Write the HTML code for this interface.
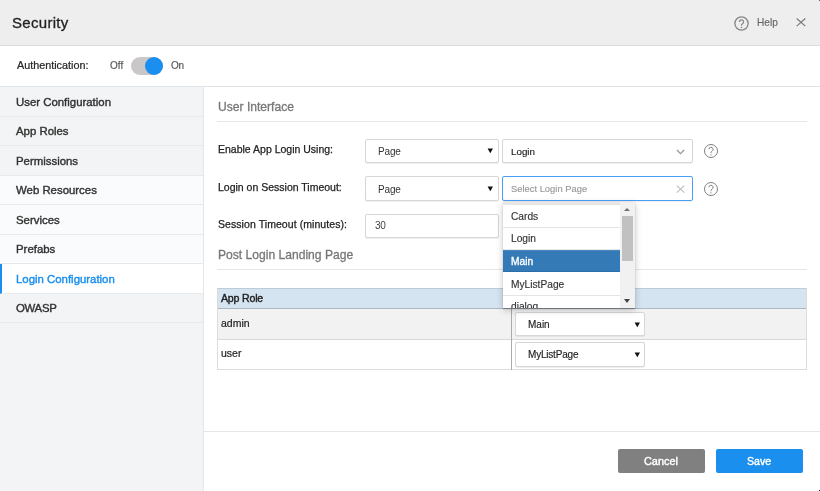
<!DOCTYPE html>
<html><head><meta charset="utf-8">
<style>
*{margin:0;padding:0;box-sizing:border-box}
html,body{width:820px;height:491px;overflow:hidden;background:#fff;-webkit-font-smoothing:antialiased;font-family:"Liberation Sans",sans-serif;color:#333}
.a{position:absolute}
.t{position:absolute;white-space:nowrap;line-height:1;will-change:transform;-webkit-text-stroke-width:.15px}
.m{-webkit-text-stroke-width:.4px}
#hdr{left:0;top:0;width:820px;height:46px;background:#eeeeee;border-bottom:1px solid #dcdcdc}
#auth{left:0;top:46px;width:820px;height:41px;border-bottom:1px solid #dfe4e8}
#side{left:0;top:87px;width:204px;height:404px;background:#f3f4f6;border-right:1px solid #e3e7ea}
.si{position:absolute;left:0;width:203px;border-bottom:1px solid #e6eaed}
.sel{position:absolute;border:1px solid #d6d6d6;border-radius:2px;background:#fff;box-shadow:0 1px 0 rgba(0,0,0,.06)}
.arr{position:absolute;width:0;height:0;border-left:2.8px solid transparent;border-right:2.8px solid transparent;border-top:5px solid #111}
.hline{position:absolute;height:1px;background:#e6e6e6}
</style></head><body>
<!-- header -->
<div id="hdr" class="a"></div>
<div class="t" style="left:12.2px;top:14.8px;font-size:15px;letter-spacing:.3px;color:#222;-webkit-text-stroke-width:.3px">Security</div>
<svg class="a" style="left:734.3px;top:15.8px" width="15" height="15" viewBox="0 0 15 15"><circle cx="7.5" cy="7.5" r="6.6" fill="none" stroke="#858585" stroke-width="1.3"/><path d="M5.4 5.9a2.1 2.1 0 1 1 3.1 1.9c-.6.3-1 .7-1 1.4v.6" fill="none" stroke="#858585" stroke-width="1.2"/><circle cx="7.5" cy="11.4" r=".75" fill="#858585"/></svg>
<div class="t" style="left:757px;top:18.4px;font-size:10.1px;color:#666">Help</div>
<svg class="a" style="left:796.3px;top:17.8px" width="10" height="9" viewBox="0 0 10 9"><path d="M.7 .5L9.3 8.1M9.3 .5L.7 8.1" stroke="#777" stroke-width="1.1"/></svg>

<!-- auth row -->
<div id="auth" class="a"></div>
<div class="t" style="left:17px;top:59.6px;font-size:10.8px;color:#262626;-webkit-text-stroke-width:.22px">Authentication:</div>
<div class="t" style="left:109.5px;top:60.8px;font-size:10px;color:#555">Off</div>
<div class="a" style="left:131px;top:56.7px;width:32px;height:18px;border-radius:9px;background:#c9c7c7"></div>
<div class="a" style="left:145px;top:56.7px;width:18px;height:18px;border-radius:9px;background:#1a8ff0"></div>
<div class="t" style="left:170.5px;top:60.8px;font-size:10px;letter-spacing:-.4px;color:#555">On</div>

<!-- sidebar -->
<div id="side" class="a"></div>
<div class="si" style="top:87px;height:30px"></div>
<div class="si" style="top:117px;height:29px"></div>
<div class="si" style="top:146px;height:30px"></div>
<div class="si" style="top:176px;height:29px;background:#fafbfc"></div>
<div class="si" style="top:205px;height:30px;background:#fafbfc"></div>
<div class="si" style="top:235px;height:29px;background:#fafbfc"></div>
<div class="si" style="top:264px;height:30px;background:#fff;border-left:2px solid #1a8ff0"></div>
<div class="si" style="top:294px;height:29px"></div>
<div class="a" style="left:0;top:176px;width:203px;height:1px;background:#fdfdfe"></div>
<div class="a" style="left:0;top:262px;width:203px;height:1px;background:#fdfdfe"></div>
<div class="t m" style="left:16px;top:96.5px;font-size:11.4px;color:#333">User Configuration</div>
<div class="t m" style="left:16px;top:126.0px;font-size:11.4px;color:#333">App Roles</div>
<div class="t m" style="left:16px;top:155.5px;font-size:11.4px;color:#333">Permissions</div>
<div class="t m" style="left:16px;top:185.0px;font-size:11.4px;color:#333">Web Resources</div>
<div class="t m" style="left:16px;top:214.5px;font-size:11.4px;color:#333">Services</div>
<div class="t m" style="left:16px;top:244.0px;font-size:11.4px;color:#333">Prefabs</div>
<div class="t m" style="left:16px;top:273.5px;font-size:11.4px;color:#1a8ff0">Login Configuration</div>
<div class="t m" style="left:16px;top:303.0px;font-size:11.4px;color:#333;letter-spacing:-.3px">OWASP</div>

<!-- content -->
<div class="t" style="left:218px;top:100.6px;font-size:12.1px;color:#777;-webkit-text-stroke-width:.3px">User Interface</div>
<div class="hline" style="left:217px;top:121px;width:590px"></div>

<div class="t" style="left:218px;top:144.2px;font-size:10.5px;color:#222;-webkit-text-stroke-width:.25px">Enable App Login Using:</div>
<div class="t" style="left:218px;top:181.7px;font-size:10.5px;color:#222;-webkit-text-stroke-width:.25px">Login on Session Timeout:</div>
<div class="t" style="left:218px;top:218.8px;font-size:10.5px;letter-spacing:.07px;color:#222;-webkit-text-stroke-width:.25px">Session Timeout (minutes):</div>

<div class="sel" style="left:365px;top:139px;width:134px;height:24px"></div>
<div class="t" style="left:378px;top:147.2px;font-size:10px;letter-spacing:-.15px;color:#333;-webkit-text-stroke-width:0">Page</div>
<svg class="a" style="left:487.2px;top:148.4px" width="7" height="6" viewBox="0 0 7 6"><path d="M.6 .4H6L3.3 5.2Z" fill="#111"/></svg>
<div class="sel" style="left:502px;top:139px;width:191px;height:24px"></div>
<div class="t" style="left:511.4px;top:147.2px;font-size:9.8px;color:#222">Login</div>
<svg class="a" style="left:675.9px;top:149px" width="9" height="6" viewBox="0 0 9 6"><path d="M.9 1l3.6 3.6L8.1 1" fill="none" stroke="#999" stroke-width="1.3"/></svg>
<svg class="a" style="left:703px;top:143px" width="16" height="16" viewBox="0 0 16 16"><circle cx="8" cy="8" r="6.5" fill="none" stroke="#808080" stroke-width="1"/><path d="M5.9 6.3a2.1 2.1 0 1 1 3.1 1.9c-.6.3-1 .7-1 1.4v.6" fill="none" stroke="#808080" stroke-width="1"/><circle cx="8" cy="11.8" r=".65" fill="#808080"/></svg>

<div class="sel" style="left:365px;top:176px;width:134px;height:25px"></div>
<div class="t" style="left:378px;top:184.5px;font-size:10px;letter-spacing:-.15px;color:#333;-webkit-text-stroke-width:0">Page</div>
<svg class="a" style="left:487.2px;top:185.6px" width="7" height="6" viewBox="0 0 7 6"><path d="M.6 .4H6L3.3 5.2Z" fill="#111"/></svg>
<div class="sel" style="left:502px;top:176px;width:191px;height:25px;border-color:#4a9ff5"></div>
<div class="t" style="left:511.4px;top:184.4px;font-size:9.4px;color:#9a9a9a">Select Login Page</div>
<svg class="a" style="left:676px;top:184.5px" width="9" height="8" viewBox="0 0 9 8"><path d="M.8 .6l7.4 7M8.2 .6l-7.4 7" fill="none" stroke="#bdbdbd" stroke-width="1.1"/></svg>
<svg class="a" style="left:703px;top:180.5px" width="16" height="16" viewBox="0 0 16 16"><circle cx="8" cy="8" r="6.5" fill="none" stroke="#808080" stroke-width="1"/><path d="M5.9 6.3a2.1 2.1 0 1 1 3.1 1.9c-.6.3-1 .7-1 1.4v.6" fill="none" stroke="#808080" stroke-width="1"/><circle cx="8" cy="11.8" r=".65" fill="#808080"/></svg>

<div class="sel" style="left:365px;top:214px;width:134px;height:24px"></div>
<div class="t" style="left:374.8px;top:221.4px;font-size:10px;letter-spacing:-.3px;color:#444;-webkit-text-stroke-width:0">30</div>

<div class="t" style="left:218px;top:248.6px;font-size:12.1px;color:#777;-webkit-text-stroke-width:.3px">Post Login Landing Page</div>
<div class="hline" style="left:217px;top:269px;width:590px"></div>

<!-- table -->
<div class="a" style="left:217px;top:288px;width:590px;height:82px;border:1px solid #dcdcdc;border-top-color:#bccdd9"></div>
<div class="a" style="left:218px;top:289px;width:588px;height:20px;background:#d4e4f0;border-bottom:1px solid #adb9c2"></div>
<div class="a" style="left:218px;top:309px;width:588px;height:31px;background:#f2f2f2;border-bottom:1px solid #d8d8d8"></div>
<div class="a" style="left:511px;top:300px;width:1px;height:70px;background:#ababab"></div>
<div class="t" style="left:221.3px;top:292.6px;font-size:10.6px;letter-spacing:-.2px;-webkit-text-stroke-width:.4px;color:#222">App Role</div>
<div class="t" style="left:221.3px;top:318px;font-size:10.5px;color:#262626;-webkit-text-stroke-width:.22px">admin</div>
<div class="t" style="left:221.3px;top:348px;font-size:10.5px;color:#262626;-webkit-text-stroke-width:.22px">user</div>
<div class="sel" style="left:515px;top:312px;width:130px;height:24px"></div>
<div class="t" style="left:528.4px;top:319.9px;font-size:10px;color:#222">Main</div>
<svg class="a" style="left:633.6px;top:321.6px" width="7" height="6" viewBox="0 0 7 6"><path d="M.6 .4H6L3.3 5.2Z" fill="#111"/></svg>
<div class="sel" style="left:515px;top:342px;width:130px;height:24.5px"></div>
<div class="t" style="left:528.4px;top:350.2px;font-size:10px;letter-spacing:-.2px;color:#222">MyListPage</div>
<svg class="a" style="left:633.6px;top:351.7px" width="7" height="6" viewBox="0 0 7 6"><path d="M.6 .4H6L3.3 5.2Z" fill="#111"/></svg>

<!-- dropdown -->
<div class="a" style="left:503px;top:202px;width:132px;height:106px;background:#fff;box-shadow:0 1px 1px rgba(0,0,0,.25),0 2px 7px rgba(0,0,0,.22);overflow:hidden">
  <div class="a" style="left:0;top:0;width:117px;height:3px;background:#e6e6e6"></div>
  <div class="a" style="left:0;top:3px;width:117px;height:23px;border-bottom:1px solid #e5e5e5"></div>
  <div class="a" style="left:0;top:26px;width:117px;height:22px;border-bottom:1px solid #e5e5e5"></div>
  <div class="a" style="left:0;top:48.3px;width:117px;height:21.7px;background:#337ab7;border-bottom:1px solid #2c6dab;border-top:1px solid #4a87c0"></div>
  <div class="a" style="left:0;top:70px;width:117px;height:24px;border-bottom:1px solid #e5e5e5"></div>
  <div class="t" style="left:8.1px;top:10.4px;font-size:10.2px;color:#333">Cards</div>
  <div class="t" style="left:8.1px;top:32.4px;font-size:10.2px;color:#333">Login</div>
  <div class="t" style="left:8.1px;top:55px;font-size:10.2px;color:#fff;-webkit-text-stroke:.35px #fff">Main</div>
  <div class="t" style="left:8.1px;top:77.8px;font-size:10.2px;color:#333">MyListPage</div>
  <div class="t" style="left:8.1px;top:100.3px;font-size:10.2px;color:#333">dialog</div>
  <div class="a" style="left:117px;top:0;width:15px;height:106px;background:#f1f1f1"></div>
  <div class="a" style="left:119px;top:13.8px;width:11px;height:45.4px;background:#c1c1c1"></div>
  <div class="a" style="left:120.5px;top:5.8px;width:0;height:0;border-left:3.5px solid transparent;border-right:3.5px solid transparent;border-bottom:3.5px solid #707070"></div>
  <div class="a" style="left:120.8px;top:96.8px;width:0;height:0;border-left:3.7px solid transparent;border-right:3.7px solid transparent;border-top:4px solid #444"></div>
</div>

<!-- footer -->
<div class="hline" style="left:204px;top:431px;width:616px;background:#e3e7ea"></div>
<div class="a" style="left:618px;top:449px;width:87px;height:24px;background:#808080;border-radius:2px"></div>
<div class="t m" style="left:643.9px;top:455.5px;font-size:10.9px;color:#fff">Cancel</div>
<div class="a" style="left:716px;top:449px;width:87px;height:24px;background:#1a8fee;border-radius:2px"></div>
<div class="t m" style="left:746.8px;top:455.5px;font-size:10.6px;color:#fff">Save</div>
<div class="a" style="left:819px;top:0;width:1px;height:1px;background:#666"></div>
<div class="a" style="left:819px;top:490px;width:1px;height:1px;background:#333"></div>
</body></html>
